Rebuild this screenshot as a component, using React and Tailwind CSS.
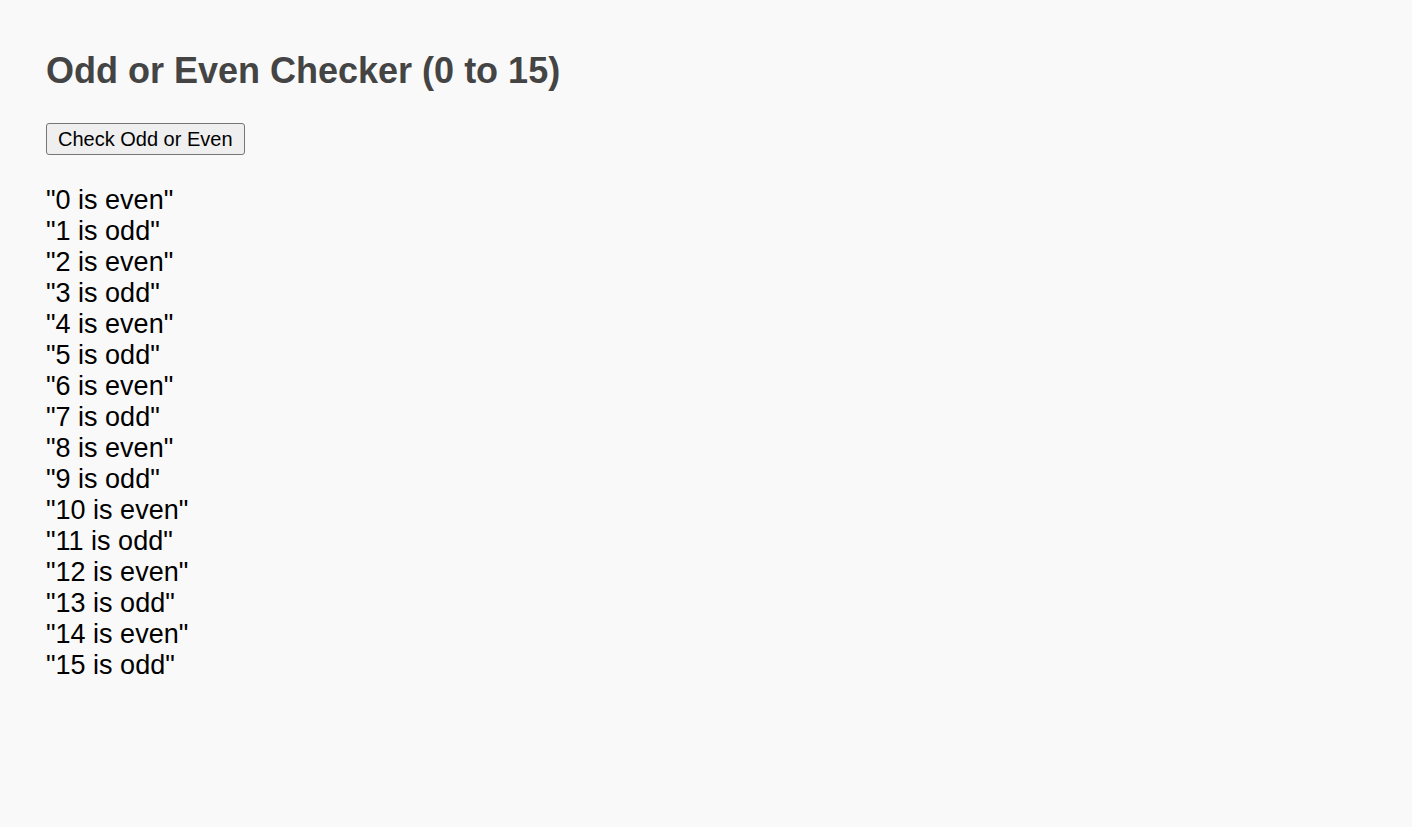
import { useState } from "react";

const initial = Array.from({ length: 16 }, (_, i) => `"${i} is ${i % 2 === 0 ? "even" : "odd"}"`);

export default function App() {
  const [results, setResults] = useState(initial);

  const handleCheck = () => {
    const out = [];
    for (let i = 0; i <= 15; i++) {
      out.push(`"${i} is ${i % 2 === 0 ? "even" : "odd"}"`);
    }
    setResults(out);
  };

  return (
    <div
      className="min-h-screen bg-[#f9f9f9] pt-[50px] pl-[46px] text-black"
      style={{ fontFamily: '"Liberation Sans", Arial, sans-serif' }}
    >
      <h1 className="text-[36px] leading-[41px] font-bold text-[#444444]">
        Odd or Even Checker (0 to 15)
      </h1>

      <button
        onClick={handleCheck}
        className="mt-[32px] h-[32px] px-[11px] text-[20px] leading-[23px] bg-[#efefef] border border-[#767676] rounded-[3px] hover:bg-[#e5e5e5]"
      >
        Check Odd or Even
      </button>

      <div className="mt-[30px] text-[27px] leading-[31px]">
        {results.map((r) => (
          <div key={r}>{r}</div>
        ))}
      </div>
    </div>
  );
}
